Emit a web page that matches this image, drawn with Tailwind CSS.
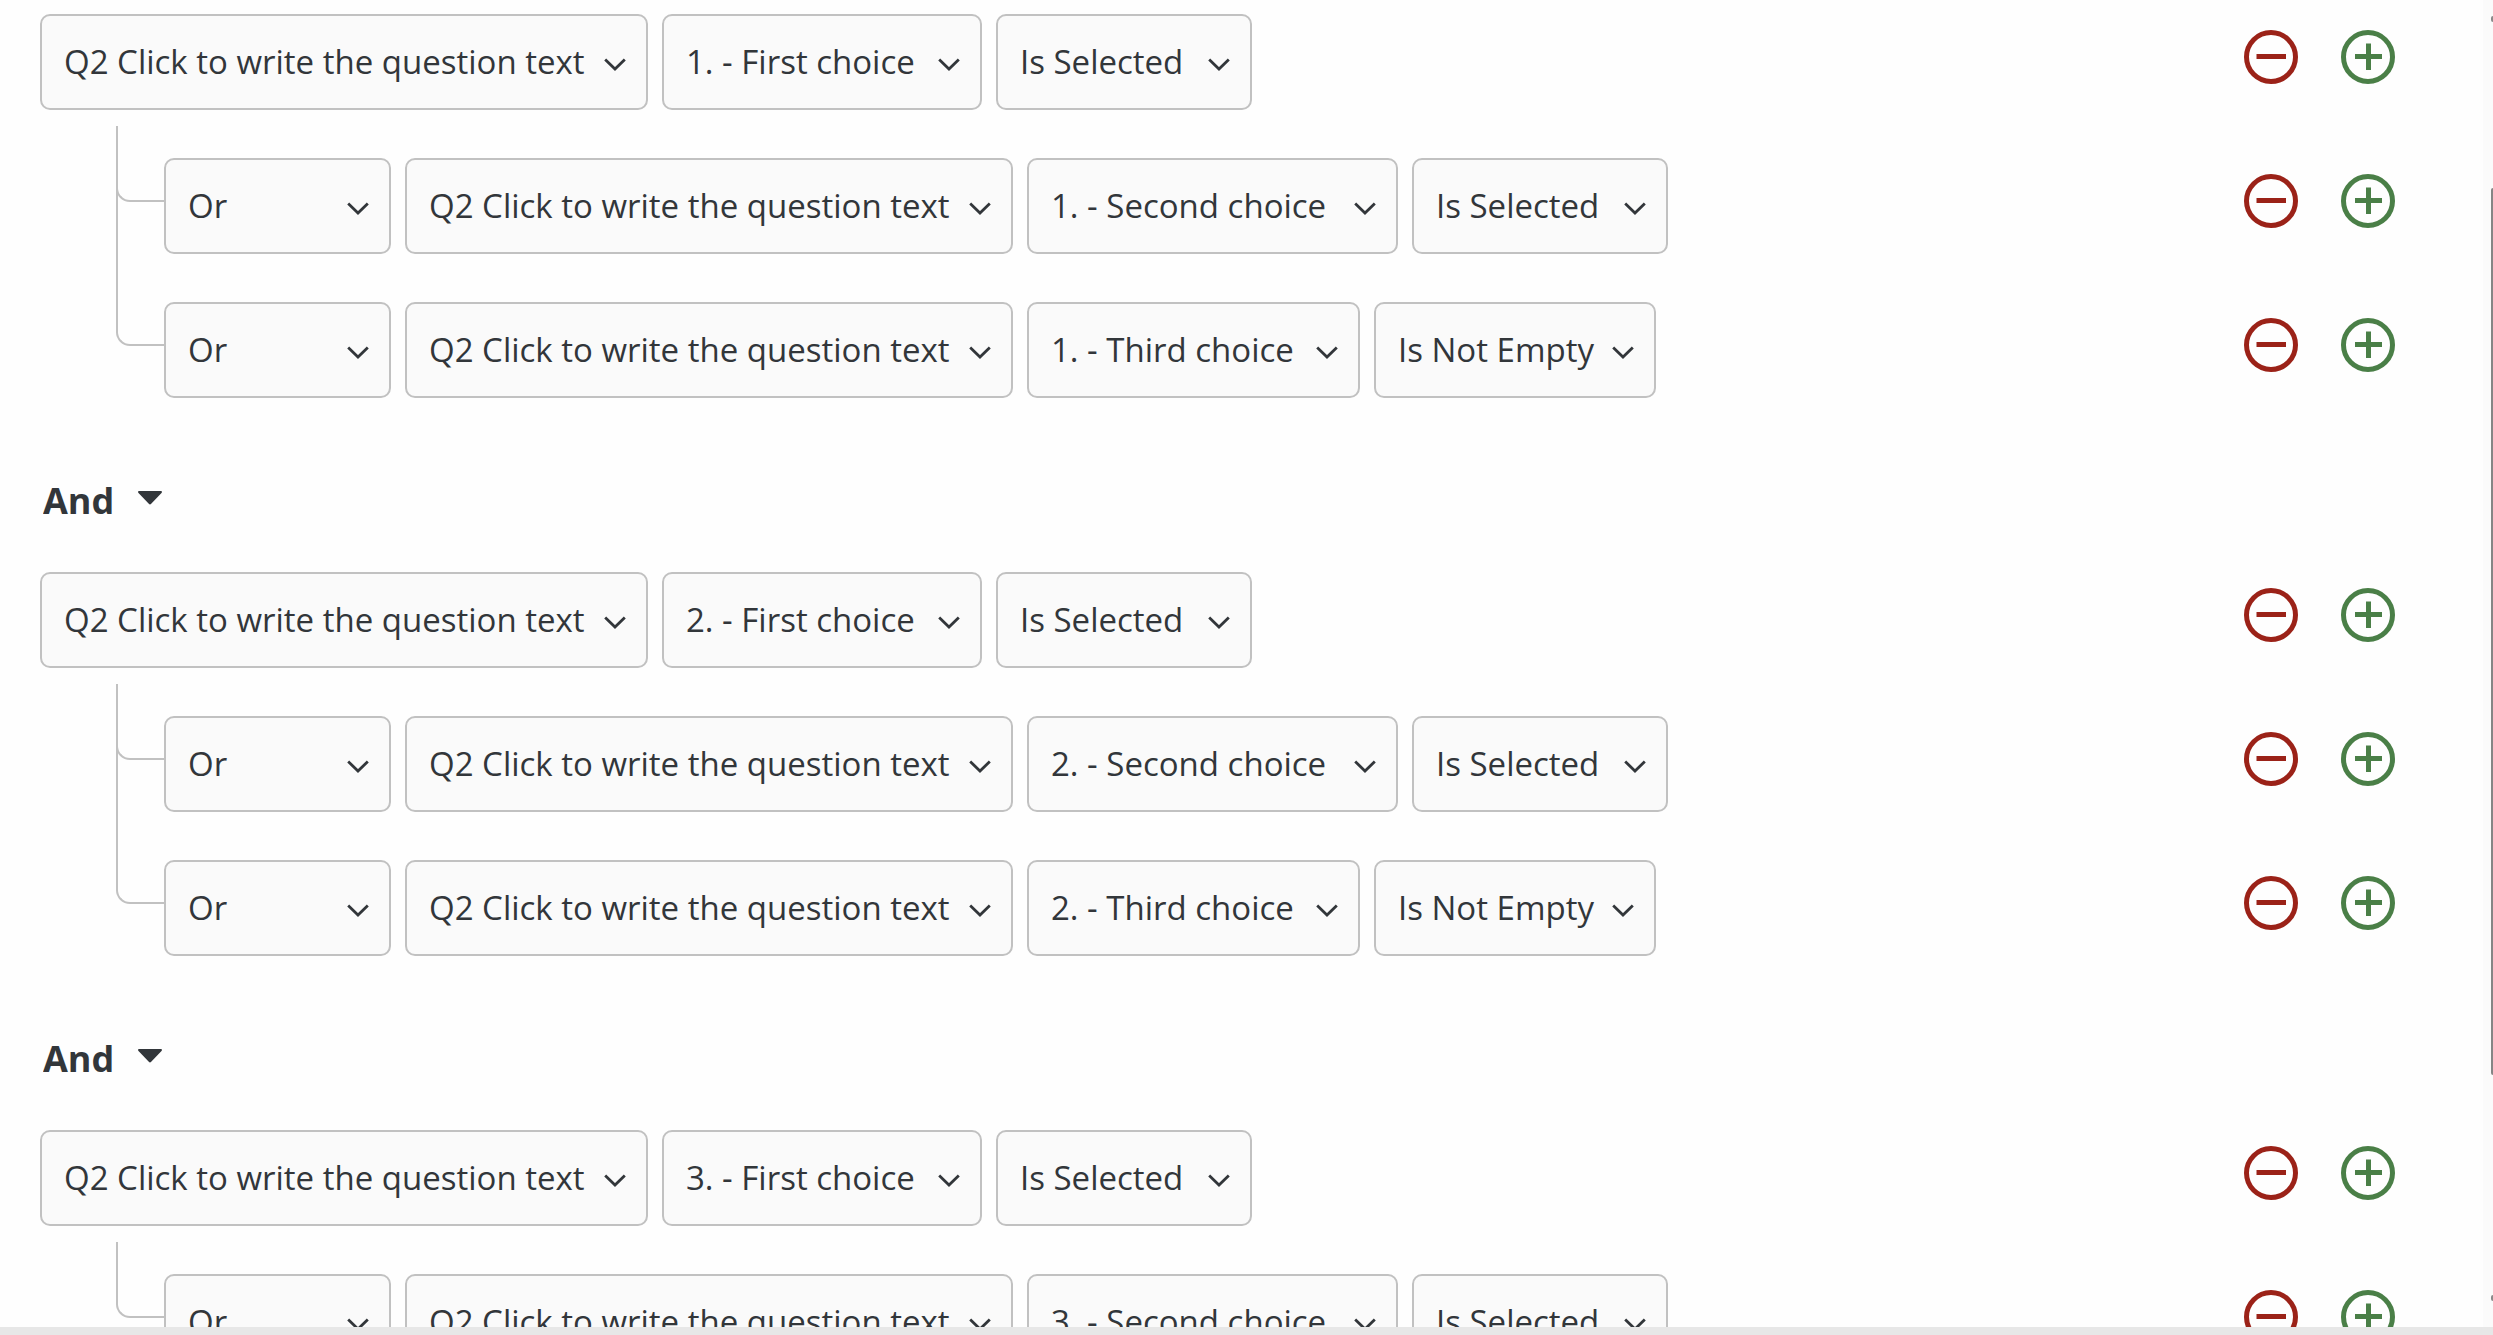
<!DOCTYPE html>
<html lang="en">
<head>
    <meta charset="UTF-8">
    <meta name="viewport" content="width=device-width, initial-scale=1.0">
    <title>Display Logic</title>
    <script src="https://cdn.jsdelivr.net/npm/@tailwindcss/browser@4"></script>
</head>
<body class="relative flex h-screen flex-col overflow-hidden bg-[#fefefe] font-['Open_Sans','Noto_Sans',sans-serif] text-[#32363a]">
    <!-- Icons -->
    <svg class="hidden">
        <symbol id="chevron" viewBox="0 0 22 13">
            <path d="M1.2 1.5 11 11 20.8 1.5" fill="none" stroke="currentColor" stroke-width="2.8"/>
        </symbol>
        <symbol id="caret" viewBox="0 0 24 14">
            <path d="M1.2 0h21.6c1.2 0 1.5 1.3.7 2.1L13.2 12.8c-.8.8-1.6.8-2.4 0L.5 2.1C-.3 1.3 0 0 1.2 0z" fill="currentColor"/>
        </symbol>
        <symbol id="minus" viewBox="0 0 54 54">
            <circle cx="27" cy="27" r="24.5" fill="none" stroke="currentColor" stroke-width="5"/>
            <path d="M12.5 26.5H42" stroke="currentColor" stroke-width="5"/>
        </symbol>
        <symbol id="plus" viewBox="0 0 54 54">
            <circle cx="27" cy="27" r="24.5" fill="none" stroke="currentColor" stroke-width="5"/>
            <path d="M14 26.5h27M27.5 13.5V40" stroke="currentColor" stroke-width="5"/>
        </symbol>
    </svg>

    <main id="logic" class="min-h-0 flex-1 overflow-hidden pt-[14px] pr-[98px] pl-10"></main>
    <footer class="h-2 shrink-0 bg-[#e7e7e7]"></footer>

    <!-- Scrollbar at the window edge -->
    <div class="absolute top-0 right-0 bottom-2 flex w-[10px] flex-col items-end bg-[#fbfbfb] pt-4 pb-[26px]">
        <span class="h-[6px] w-[2px] rounded-l-full bg-[#8a8a8a]"></span>
        <span class="mt-[166px] h-[69%] w-[2px] rounded-l-full bg-[#858585]"></span>
        <span class="mt-auto h-[6px] w-[2px] rounded-l-full bg-[#8a8a8a]"></span>
    </div>

    <script>
        const QUESTION = 'Q2 Click to write the question text';

        const widths = {
            or: 'w-[227px]',
            question: 'w-[608px]',
            first: 'w-[320px]',
            second: 'w-[371px]',
            third: 'w-[333px]',
            selected: 'w-[256px]',
            notEmpty: 'w-[282px]',
        };

        const dropdown = (label, text, width) => `
            <div class="grid shrink-0 items-center ${widths[width]}">
                <select aria-label="${label}" class="col-start-1 row-start-1 h-24 w-full appearance-none rounded-[10px] border-2 border-[#c1c1c1] bg-[#fafafa] pl-[22px] text-[33px]">
                    <option>${text}</option>
                </select>
                <svg class="pointer-events-none col-start-1 row-start-1 mt-1 mr-[22px] h-[13px] w-[22px] justify-self-end"><use href="#chevron"/></svg>
            </div>`;

        const actions = `
            <div class="ml-auto flex shrink-0 gap-[43px] self-start pt-4">
                <button aria-label="Remove condition" class="text-[#9b2218]"><svg class="size-[54px]"><use href="#minus"/></svg></button>
                <button aria-label="Add condition" class="text-[#4a7f47]"><svg class="size-[54px]"><use href="#plus"/></svg></button>
            </div>`;

        // lines from the first condition down to each "Or"
        const connectors = [
            '-mt-8 h-[76px]',
            '-mt-[114px] h-[158px]',
        ];

        const group = (n, rows) => `
            <section class="flex flex-col gap-12">
                <div class="flex gap-[14px]">
                    ${dropdown('Question', QUESTION, 'question')}
                    ${dropdown('Choice', n + '. - First choice', 'first')}
                    ${dropdown('Condition', 'Is Selected', 'selected')}
                    ${actions}
                </div>
                ${rows.map(([choice, choiceWidth, test, testWidth], i) => `
                <div class="flex pl-[76px]">
                    <span class="w-12 shrink-0 rounded-bl-[14px] border-b-2 border-l-2 border-[#c1c1c1] ${connectors[i]}"></span>
                    <div class="flex flex-1 gap-[14px]">
                        ${dropdown('Operator', 'Or', 'or')}
                        ${dropdown('Question', QUESTION, 'question')}
                        ${dropdown('Choice', n + '. - ' + choice, choiceWidth)}
                        ${dropdown('Condition', test, testWidth)}
                        ${actions}
                    </div>
                </div>`).join('')}
            </section>`;

        const and = `
            <div class="flex pt-[76px] pb-[46px] pl-[3px]">
                <div class="grid w-[119px] items-center">
                    <select aria-label="Group operator" class="col-start-1 row-start-1 h-[52px] w-full appearance-none text-[36px] font-bold">
                        <option>And</option>
                    </select>
                    <svg class="pointer-events-none col-start-1 row-start-1 -mt-1 h-[14px] w-6 justify-self-end"><use href="#caret"/></svg>
                </div>
            </div>`;

        const second = ['Second choice', 'second', 'Is Selected', 'selected'];
        const third = ['Third choice', 'third', 'Is Not Empty', 'notEmpty'];

        document.getElementById('logic').innerHTML = [
            group(1, [second, third]),
            group(2, [second, third]),
            group(3, [second]),
        ].join(and);
    </script>
</body>
</html>
